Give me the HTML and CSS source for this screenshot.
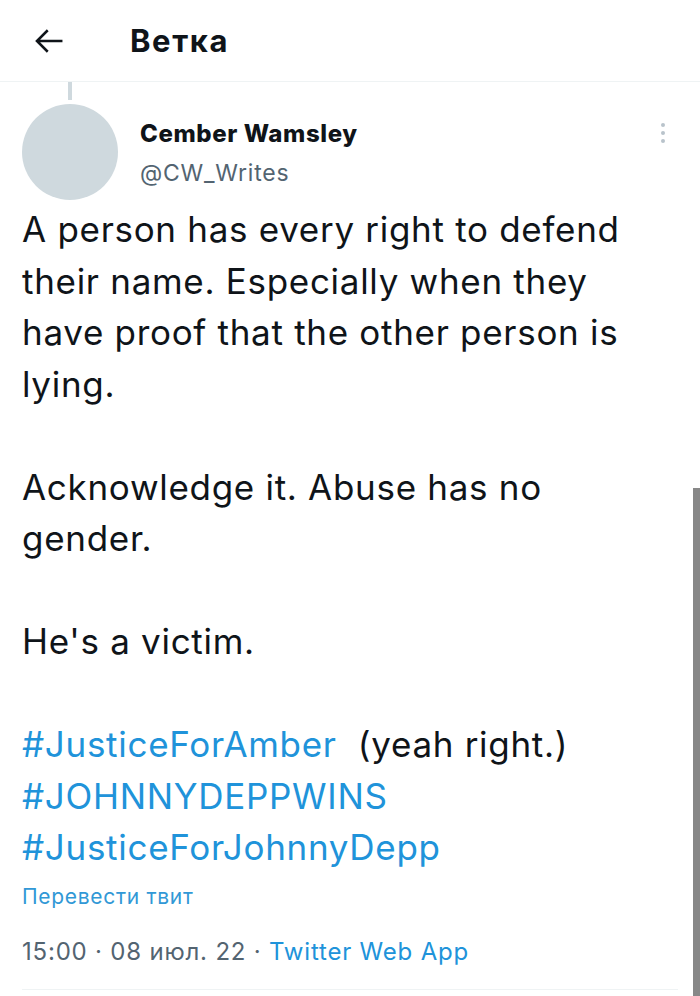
FILE: index.html
```html
<!DOCTYPE html>
<html lang="ru">
<head>
  <meta charset="UTF-8">
  <meta name="viewport" content="width=device-width, initial-scale=1.0">
  <title>Ветка</title>
  <link rel="stylesheet" href="styles.css">
</head>
<body>

<header class="topbar">
  <button class="back" aria-label="Назад">
    <svg viewBox="0 0 24 24" width="38" height="38">
      <path d="M20.5 12H4.6M11.2 5.2L4.4 12l6.8 6.8" fill="none" stroke="#0f1419" stroke-width="1.6"/>
    </svg>
  </button>
  <h1>Ветка</h1>
</header>

<article class="tweet">
  <div class="thread-line"></div>

  <div class="author">
    <div class="avatar"></div>
    <div class="names">
      <div class="name">Cember Wamsley</div>
      <div class="handle">@CW_Writes</div>
    </div>
    <div class="more">
      <span></span><span></span><span></span>
    </div>
  </div>

  <div class="tweet-text">
    <p>A person has every right to defend their name. Especially when they have proof that the other person is lying.</p>
    <p>Acknowledge it. Abuse has no gender.</p>
    <p>He's a victim.</p>
    <p><a class="tag">#JusticeForAmber</a>&nbsp; (yeah right.)<br><a class="tag">#JOHNNYDEPPWINS</a><br><a class="tag">#JusticeForJohnnyDepp</a></p>
  </div>

  <a class="translate">Перевести твит</a>

  <div class="meta">15:00 · 08 июл. 22 · <a class="source">Twitter Web App</a></div>
</article>

<div class="scroll-thumb"></div>

</body>
</html>
```

FILE: styles.css
```css
html, body {
  margin: 0;
  padding: 0;
  background: #fff;
  color: #0f1419;
  font-family: Inter, "Noto Sans", sans-serif;
}

body {
  position: relative;
  height: 996px;
  overflow: hidden;
}

.topbar {
  display: flex;
  align-items: center;
  height: 82px;
  border-bottom: 1px solid #eff3f4;
  padding-left: 30px;
  box-sizing: border-box;
}

.back {
  display: flex;
  padding: 0;
  margin: 0 62px 0 0;
  border: none;
  background: none;
}

.topbar h1 {
  margin: 0;
  font-size: 31px;
  font-weight: 700;
  letter-spacing: 1.6px;
}

.tweet {
  padding: 0 22px;
}

.thread-line {
  width: 4px;
  height: 18px;
  margin-left: 46px;
  background: #cfd9de;
}

.author {
  display: flex;
  align-items: flex-start;
  margin-top: 4px;
}

.avatar {
  width: 96px;
  height: 96px;
  border-radius: 50%;
  background: #cfd9de;
  flex-shrink: 0;
}

.names {
  flex: 1;
  padding: 15px 0 0 22px;
}

.name {
  font-size: 24px;
  font-weight: 800;
  line-height: 30px;
  letter-spacing: 0.6px;
}

.handle {
  font-size: 23px;
  color: #536471;
  line-height: 30px;
  margin-top: 9px;
  letter-spacing: 0.8px;
}

.more {
  display: flex;
  flex-direction: column;
  gap: 4px;
  padding: 19px 13px 0 0;
}

.more span {
  width: 4px;
  height: 4px;
  border-radius: 50%;
  background: #b9c3cb;
}

.tweet-text {
  max-width: 640px;
  margin-top: 4px;
  font-size: 35px;
  line-height: 51.5px;
  letter-spacing: 0.7px;
}

.tweet-text p {
  margin: 0 0 51.5px;
}

.tweet-text p:last-child {
  margin-bottom: 0;
}

.tag, .translate, .source {
  color: #2093da;
  text-decoration: none;
}

.translate {
  display: block;
  margin-top: 10px;
  font-size: 21px;
  line-height: 26px;
  letter-spacing: 0.7px;
  color: #3198d6;
}

.meta {
  margin-top: 27px;
  font-size: 24px;
  line-height: 30px;
  letter-spacing: 0.8px;
  color: #536471;
  padding-bottom: 22px;
  border-bottom: 1px solid #eff3f4;
}

.scroll-thumb {
  position: absolute;
  right: 0;
  top: 488px;
  bottom: 0;
  width: 7px;
  background: #888;
}
```
